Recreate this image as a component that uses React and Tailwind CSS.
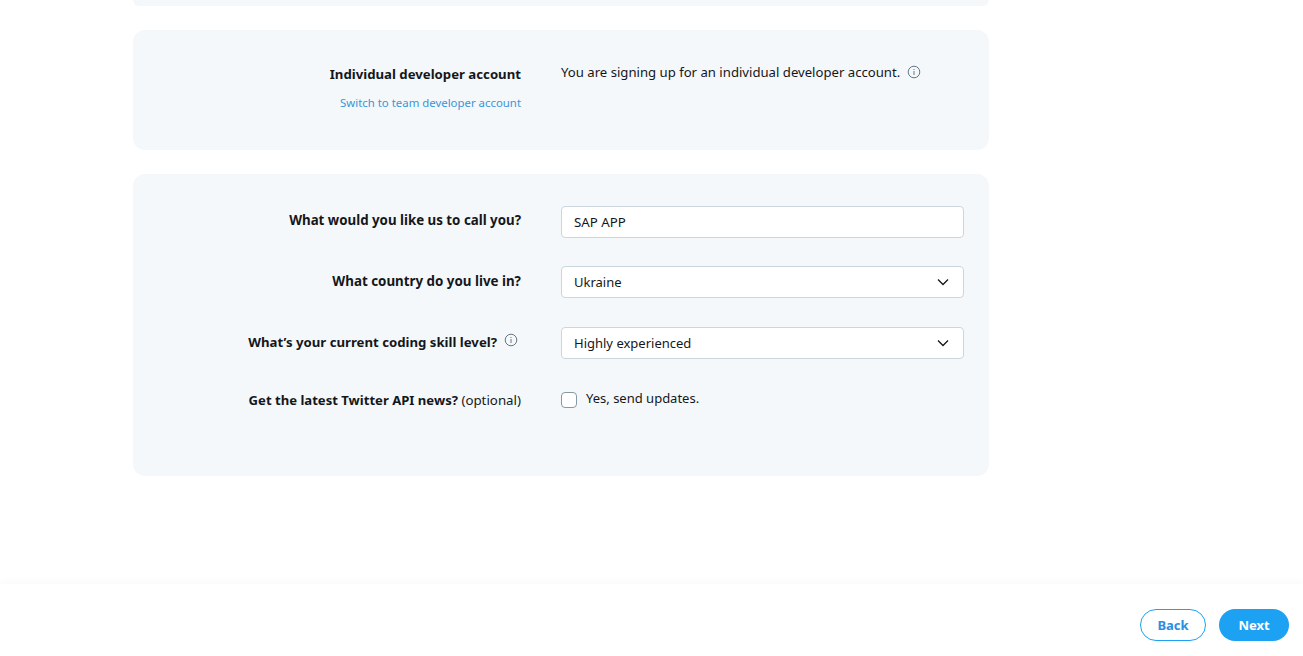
import React from 'react';

const font = "font-['Noto_Sans',sans-serif]";

const InfoIcon = ({ className = '' }) => (
  <svg width="14" height="14" viewBox="0 0 14 14" fill="none" className={`shrink-0 ${className}`}>
    <circle cx="7" cy="7" r="5.8" stroke="#657786" strokeWidth="1" />
    <rect x="6.5" y="6" width="1" height="4" fill="#657786" />
    <rect x="6.5" y="4" width="1" height="1" fill="#657786" />
  </svg>
);

const Chevron = () => (
  <svg width="12" height="8" viewBox="0 0 12 8" fill="none">
    <path d="M1 1.5 L6 6.5 L11 1.5" stroke="#14171a" strokeWidth="1.3" />
  </svg>
);

const Select = ({ value }) => (
  <div className="flex h-8 w-[403px] items-center justify-between rounded border border-[#ccd6dd] bg-white pl-3 pr-[14px] text-[13px] text-[#14171a]">
    <span className="mt-[2px]">{value}</span>
    <Chevron />
  </div>
);

const App = () => {
  return (
    <div className={`${font} flex h-screen flex-col overflow-hidden bg-white text-[#14171a]`}>
      <main className="flex-1 pl-[133px]">
        <div className="h-[6px] w-[856px] rounded-b-xl bg-[#f5f8fa]"></div>

        <section className="mt-6 h-[120px] w-[856px] rounded-xl bg-[#f5f8fa] pt-[34px]">
          <div className="flex">
            <div className="w-[388px] text-right">
              <div className="text-[13.2px] font-bold leading-5">Individual developer account</div>
              <a className="mt-[9px] block text-[11.4px] leading-5 text-[#3b94d9]">Switch to team developer account</a>
            </div>
            <div className="ml-10 -mt-[2px] flex items-center gap-[7px] self-start text-[13.15px] leading-5">
              <span>You are signing up for an individual developer account.</span>
              <InfoIcon />
            </div>
          </div>
        </section>

        <section className="mt-6 h-[302px] w-[856px] rounded-xl bg-[#f5f8fa] pt-8">
          <div className="flex items-center">
            <div className="-mt-[2px] w-[388px] text-right text-[13.3px] font-bold">What would you like us to call you?</div>
            <div className="ml-10 flex h-8 w-[403px] items-center rounded border border-[#ccd6dd] bg-white pl-3 text-[13.3px]">
              <span className="mt-[2px]">SAP APP</span>
            </div>
          </div>
          <div className="mt-7 flex items-center">
            <div className="-mt-[2px] w-[388px] text-right text-[13.35px] font-bold">What country do you live in?</div>
            <div className="ml-10"><Select value="Ukraine" /></div>
          </div>
          <div className="mt-[29px] flex items-center">
            <div className="flex w-[388px] items-center justify-end gap-[7px] pr-[3px] text-[13.2px] font-bold">
              <span>What’s your current coding skill level?</span>
              <InfoIcon className="-mt-[5px]" />
            </div>
            <div className="ml-10"><Select value="Highly experienced" /></div>
          </div>
          <div className="mt-[30px] flex items-center">
            <div className="mt-[2px] w-[388px] text-right text-[13.3px]">
              <span className="text-[13.1px] font-bold">Get the latest Twitter API news?</span> (optional)
            </div>
            <div className="ml-10 flex items-center gap-[9px] text-[13px]">
              <span className="h-4 w-4 rounded border border-[#8899a6] bg-white"></span>
              <span className="-mt-[2px]">Yes, send updates.</span>
            </div>
          </div>
        </section>
      </main>

      <footer className="flex h-[72px] justify-end gap-[13px] bg-white pr-[14px] pt-[25px] shadow-[0_-4px_6px_rgba(0,0,0,0.02)]">
        <button className="h-8 w-[66px] rounded-full border border-[#1da1f2] bg-white pt-[2px] text-[13px] font-bold text-[#2b8ee0]">Back</button>
        <button className="h-8 w-[70px] rounded-full bg-[#1da1f2] pt-[2px] text-[13px] font-bold text-white">Next</button>
      </footer>
    </div>
  );
};

export default App;
